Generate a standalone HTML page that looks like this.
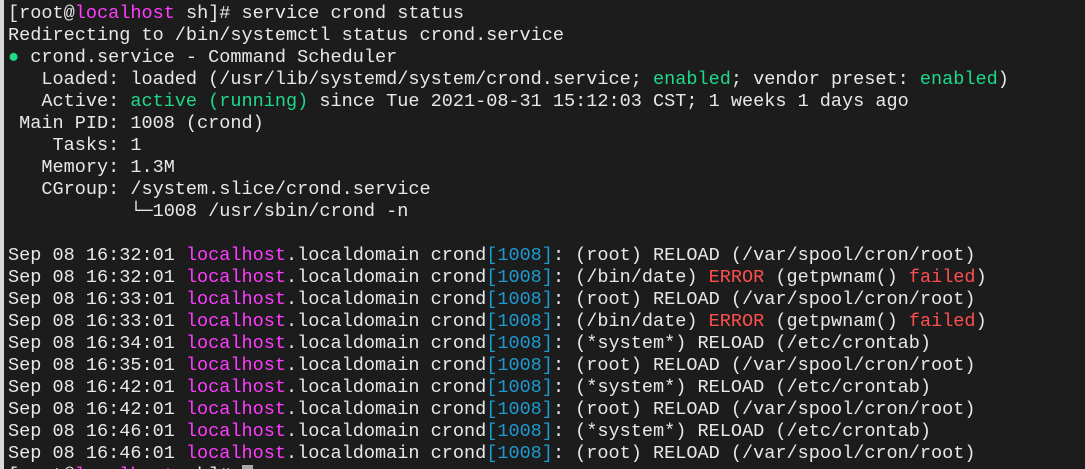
<!DOCTYPE html>
<html><head><meta charset="utf-8"><style>
html,body{margin:0;padding:0;background:#1c1c1c;width:1085px;height:469px;overflow:hidden;position:relative}
.l{position:absolute;left:0;top:0;width:4px;height:469px;background:#d8d8d8}
pre{position:absolute;left:8px;top:3px;margin:0;font-family:"Liberation Mono","DejaVu Sans Mono",monospace;font-size:18.55px;line-height:22px;color:#e8e8e8;white-space:pre}
.m{color:#ff3cff}.g{color:#1ed98a}.b{color:#1e9ad0}.r{color:#ff4e4e}
.c{background:#a8a8a8;color:#a8a8a8}
</style></head><body><div class="l"></div><pre>[root@<span class="m">localhost</span> sh]# service crond status
Redirecting to /bin/systemctl status crond.service
<span class="g">●</span> crond.service - Command Scheduler
   Loaded: loaded (/usr/lib/systemd/system/crond.service; <span class="g">enabled</span>; vendor preset: <span class="g">enabled</span>)
   Active: <span class="g">active (running)</span> since Tue 2021-08-31 15:12:03 CST; 1 weeks 1 days ago
 Main PID: 1008 (crond)
    Tasks: 1
   Memory: 1.3M
   CGroup: /system.slice/crond.service
           └─1008 /usr/sbin/crond -n

Sep 08 16:32:01 <span class="m">localhost</span>.localdomain crond<span class="b">[1008]</span>: (root) RELOAD (/var/spool/cron/root)
Sep 08 16:32:01 <span class="m">localhost</span>.localdomain crond<span class="b">[1008]</span>: (/bin/date) <span class="r">ERROR</span> (getpwnam() <span class="r">failed</span>)
Sep 08 16:33:01 <span class="m">localhost</span>.localdomain crond<span class="b">[1008]</span>: (root) RELOAD (/var/spool/cron/root)
Sep 08 16:33:01 <span class="m">localhost</span>.localdomain crond<span class="b">[1008]</span>: (/bin/date) <span class="r">ERROR</span> (getpwnam() <span class="r">failed</span>)
Sep 08 16:34:01 <span class="m">localhost</span>.localdomain crond<span class="b">[1008]</span>: (*system*) RELOAD (/etc/crontab)
Sep 08 16:35:01 <span class="m">localhost</span>.localdomain crond<span class="b">[1008]</span>: (root) RELOAD (/var/spool/cron/root)
Sep 08 16:42:01 <span class="m">localhost</span>.localdomain crond<span class="b">[1008]</span>: (*system*) RELOAD (/etc/crontab)
Sep 08 16:42:01 <span class="m">localhost</span>.localdomain crond<span class="b">[1008]</span>: (root) RELOAD (/var/spool/cron/root)
Sep 08 16:46:01 <span class="m">localhost</span>.localdomain crond<span class="b">[1008]</span>: (*system*) RELOAD (/etc/crontab)
Sep 08 16:46:01 <span class="m">localhost</span>.localdomain crond<span class="b">[1008]</span>: (root) RELOAD (/var/spool/cron/root)
[root@<span class="m">localhost</span> sh]# <span class="c">_</span></pre></body></html>
